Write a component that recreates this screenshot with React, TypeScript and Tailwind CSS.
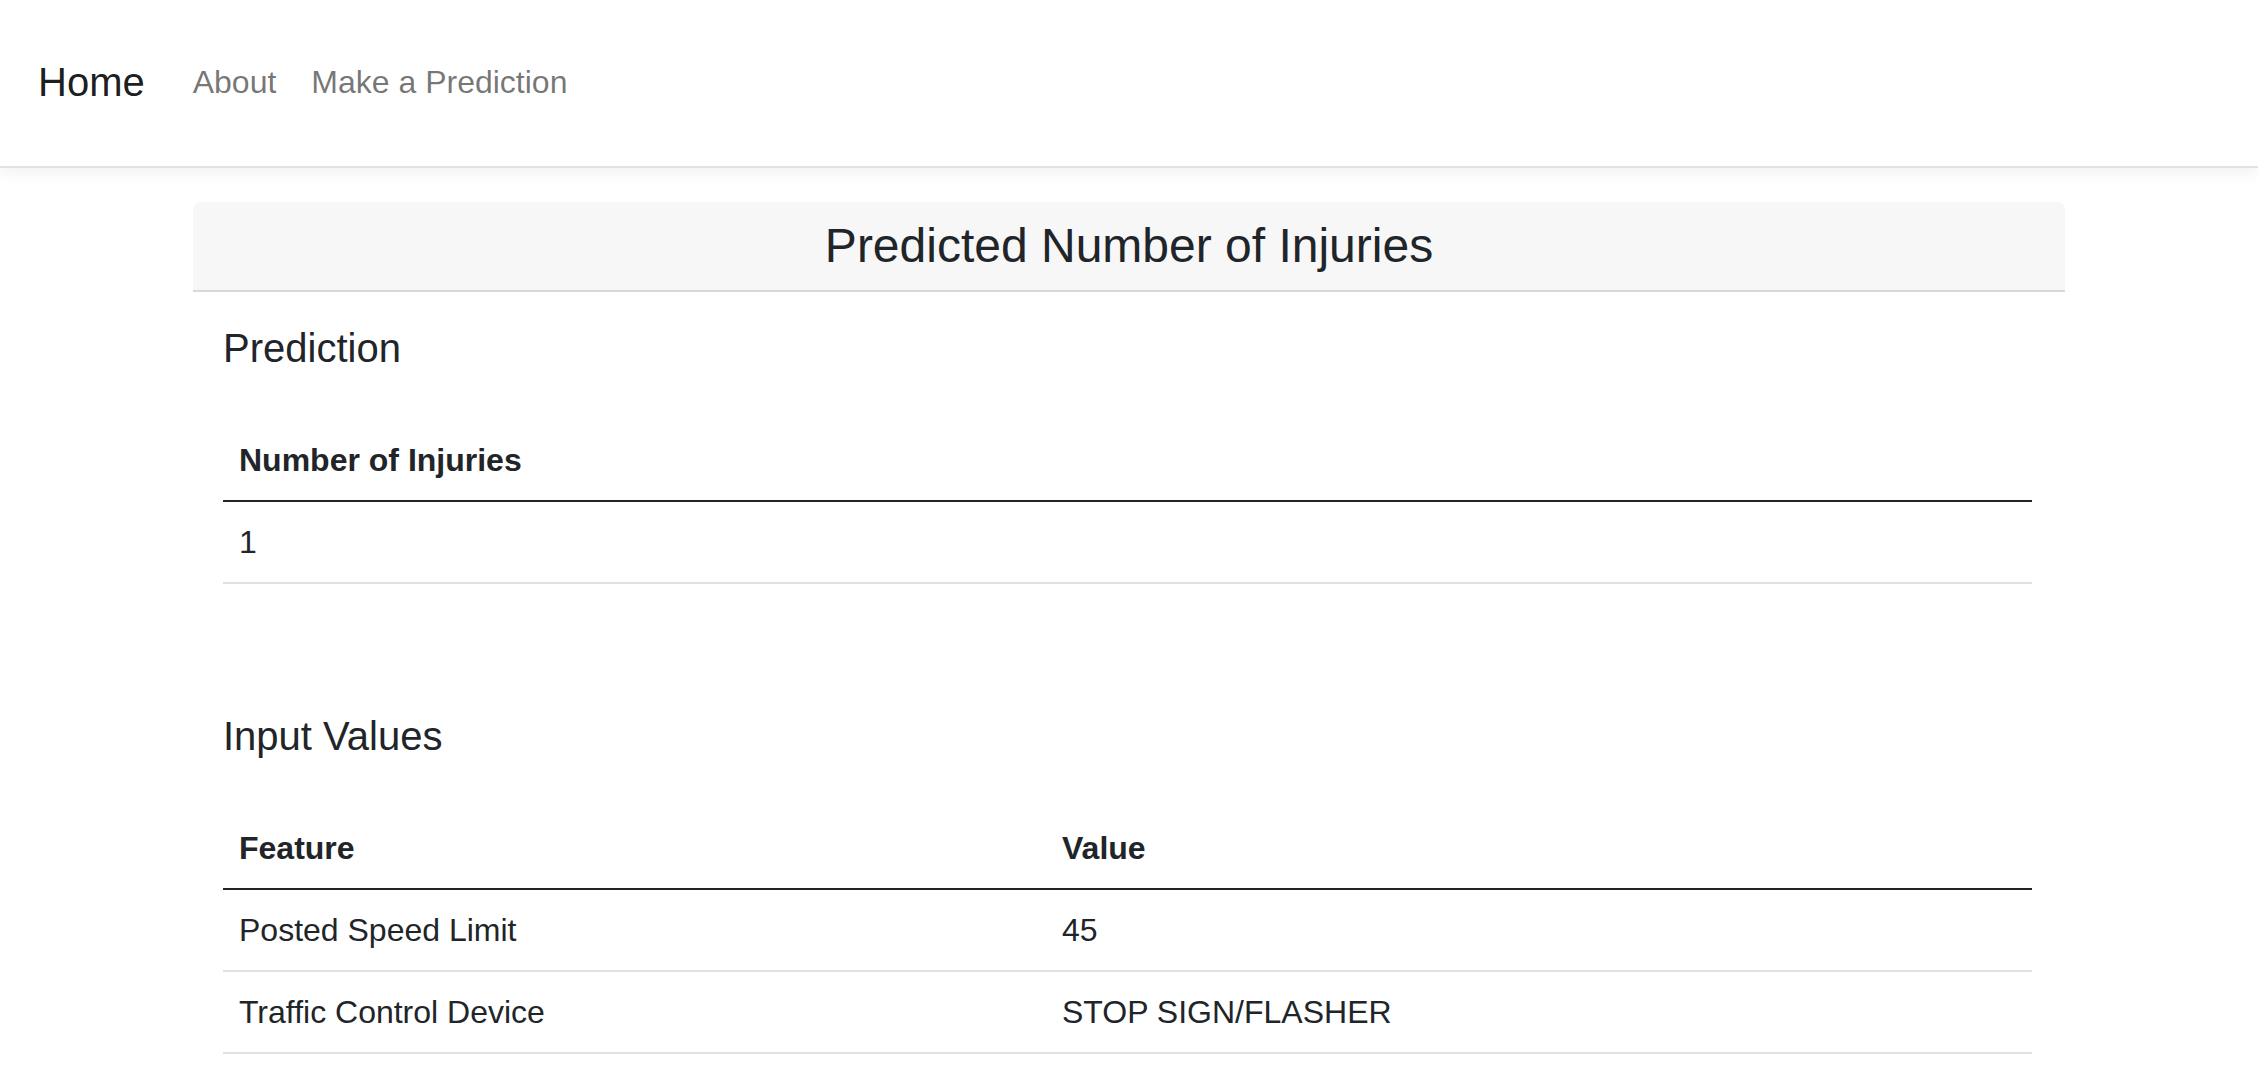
import React from 'react';

const inputs: { feature: string; value: string }[] = [
  { feature: 'Posted Speed Limit', value: '45' },
  { feature: 'Traffic Control Device', value: 'STOP SIGN/FLASHER' },
];

const App: React.FC = () => {
  return (
    <div className="min-h-screen bg-white text-[#212529] font-['Liberation_Sans','Helvetica',Arial,sans-serif]">
      <nav className="h-[168px] flex items-center pl-[38px] pr-[32px] pb-[3px] bg-white border-b-2 border-[#dfe3e7] shadow-[0_6px_14px_rgba(0,0,0,0.05)]">
        <a href="#" className="text-[40px] leading-[1.5] text-black/90 mr-[32px]">Home</a>
        <a href="#" className="text-[32px] leading-[1.5] text-black/55 pl-[16px] pr-[19px]">About</a>
        <a href="#" className="text-[32px] leading-[1.5] text-black/55 px-[16px]">Make a Prediction</a>
      </nav>

      <main className="w-[1872px] mx-auto pt-[34px]">
        <div className="rounded-[8px] bg-white">
          <div className="bg-[#f7f7f7] border-b-2 border-black/[0.125] rounded-t-[8px] px-[32px] pt-[15px] pb-[15px]">
            <h4 className="text-center text-[48px] leading-[1.2] font-medium">Predicted Number of Injuries</h4>
          </div>

          <div className="pl-[30px] pr-[33px] pt-[32px] pb-[32px]">
            <h5 className="text-[40px] leading-[1.2] font-medium mb-[48px]">Prediction</h5>
            <table className="w-full text-[32px] leading-[48px]">
              <thead>
                <tr className="border-b-2 border-[#212529]">
                  <th className="text-left font-bold p-[16px]">Number of Injuries</th>
                </tr>
              </thead>
              <tbody>
                <tr className="border-b-2 border-[#dee2e6]">
                  <td className="p-[16px]">1</td>
                </tr>
              </tbody>
            </table>

            <h5 className="text-[40px] leading-[1.2] font-medium mt-[128px] mb-[48px]">Input Values</h5>
            <table className="w-full text-[32px] leading-[48px]">
              <thead>
                <tr className="border-b-2 border-[#212529]">
                  <th className="text-left font-bold p-[16px] w-[823px]">Feature</th>
                  <th className="text-left font-bold p-[16px]">Value</th>
                </tr>
              </thead>
              <tbody>
                {inputs.map((row) => (
                  <tr key={row.feature} className="border-b-2 border-[#dee2e6]">
                    <td className="p-[16px]">{row.feature}</td>
                    <td className="p-[16px]">{row.value}</td>
                  </tr>
                ))}
              </tbody>
            </table>
          </div>
        </div>
      </main>
    </div>
  );
};

export default App;
